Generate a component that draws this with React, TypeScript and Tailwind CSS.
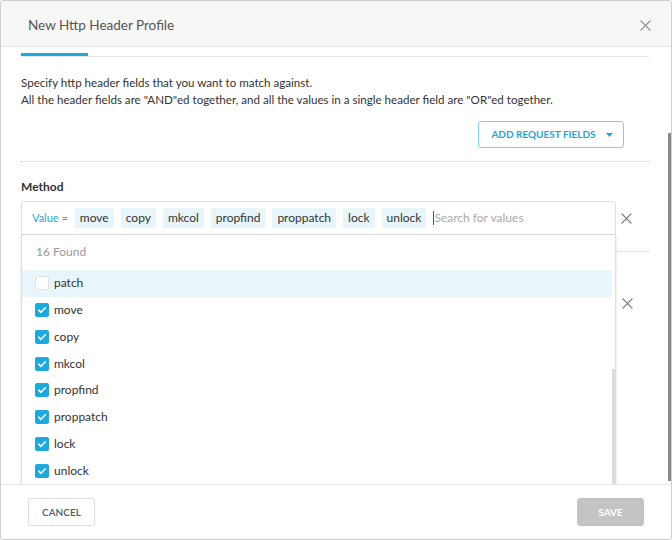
import React from "react";

const XIcon = ({ size = 11, color = "#6b7785" }: { size?: number; color?: string }) => (
  <svg width={size} height={size} viewBox="0 0 12 12" fill="none">
    <path d="M1 1L11 11M11 1L1 11" stroke={color} strokeWidth="1.3" strokeLinecap="round" />
  </svg>
);

const Check = ({ checked }: { checked: boolean }) =>
  checked ? (
    <div className="w-[14px] h-[14px] rounded-[2px] bg-[#1ea9dd] flex items-center justify-center">
      <svg width="10" height="10" viewBox="0 0 10 10" fill="none">
        <path d="M1.8 5.2L4 7.3L8.3 2.8" stroke="#fff" strokeWidth="1.6" strokeLinecap="round" strokeLinejoin="round" />
      </svg>
    </div>
  ) : (
    <div className="w-[14px] h-[14px] rounded-[2px] bg-white border border-[#e2e2e2]" />
  );

const chips = ["move", "copy", "mkcol", "propfind", "proppatch", "lock", "unlock"];
const items: { label: string; checked: boolean }[] = [
  { label: "patch", checked: false },
  { label: "move", checked: true },
  { label: "copy", checked: true },
  { label: "mkcol", checked: true },
  { label: "propfind", checked: true },
  { label: "proppatch", checked: true },
  { label: "lock", checked: true },
  { label: "unlock", checked: true },
];

export default function App() {
  return (
    <div
      className="w-[672px] h-[540px] bg-white border border-[#cfcfcf] rounded-[3px] flex flex-col overflow-hidden text-[#333]"
      style={{ fontFamily: "Lato, 'Open Sans', 'Liberation Sans', sans-serif" }}
    >
      {/* Header */}
      <div className="h-[46px] shrink-0 bg-[#f7f7f7] border-b border-[#e4e4e4] flex items-center justify-between pl-[27px] pr-[20px] pt-[4px]">
        <div className="text-[13.5px] text-[#555]">New Http Header Profile</div>
        <XIcon size={11} color="#8a8a8a" />
      </div>

      {/* Body */}
      <div className="flex-1 flex overflow-hidden border-b border-[#e6e6e6]">
        <div className="flex-1 pl-[20px] pr-[19px] relative">
          {/* Tabs */}
          <div className="mt-[6px]">
            <div className="w-[67px] h-[3px] bg-[#1ea9dd]" />
            <div className="h-px bg-[#e6e6e6]" />
          </div>

          <div className="mt-[17px] text-[11.6px] leading-[17px] text-[#333]">
            <div>Specify http header fields that you want to match against.</div>
            <div>All the header fields are "AND"ed together, and all the values in a single header field are "OR"ed together.</div>
          </div>

          <div className="flex justify-end mt-[13px] pr-[25px]">
            <button className="h-[27px] w-[146px] border border-[#7fd0ef] rounded-[3px] flex items-center justify-center gap-[10px] text-[10px] font-bold text-[#1ea5d8] bg-white pl-[2px]">
              <span>ADD REQUEST FIELDS</span>
              <svg width="7" height="4" viewBox="0 0 7 4">
                <path d="M0 0H7L3.5 4Z" fill="#1ea5d8" />
              </svg>
            </button>
          </div>

          <div className="mt-[13px] border-t border-dotted border-[#cccccc]" />

          <div className="mt-[16px] text-[12px] leading-[17px] font-bold text-[#333]">Method</div>

          {/* Method row */}
          <div className="mt-[6px] flex items-start">
            <div className="relative w-[595px]">
              <div className="h-[34px] border border-[#dedede] rounded-t-[3px] flex items-center pl-[10px] gap-[7px] text-[12px] bg-white">
                <span className="text-[11px] text-[#1ea9dd]">Value =</span>
                {chips.map((c) => (
                  <span key={c} className="h-[20px] px-[5px] bg-[#e8f6fb] flex items-center text-[#333]">
                    {c}
                  </span>
                ))}
                <span className="flex items-center text-[#aaa]">
                  <span className="w-px h-[14px] bg-[#555]" />
                  <span>Search for values</span>
                </span>
              </div>

              {/* Dropdown */}
              <div className="absolute left-0 top-[34px] w-[595px] h-[250px] bg-white border border-t-0 border-[#dedede] shadow-[0_1px_3px_rgba(0,0,0,0.12)] flex z-10">
                <div className="flex-1 flex flex-col">
                  <div className="h-[35px] flex items-center pl-[14px] text-[12px] text-[#9a9a9a]">16 Found</div>
                  {items.map((it, i) => (
                    <div
                      key={it.label}
                      className={`h-[26.8px] flex items-center pl-[13px] gap-[5px] text-[12px] text-[#333] ${i === 0 ? "bg-[#e8f5fb]" : ""}`}
                    >
                      <Check checked={it.checked} />
                      <span>{it.label}</span>
                    </div>
                  ))}
                </div>
                <div className="w-[3px] flex flex-col">
                  <div className="mt-[134px] flex-1 bg-[#dcdcdc]" />
                </div>
              </div>
            </div>
            <div className="ml-[5px] h-[34px] flex items-center">
              <XIcon />
            </div>
          </div>

          <div className="mt-[16px] border-t border-dotted border-[#cccccc]" />

          <div className="mt-[46px] flex justify-end pr-[16px]">
            <XIcon />
          </div>
        </div>
        <div className="w-[3px] flex flex-col">
          <div className="mt-[86px] h-[348px] bg-[#8a8a8a]" />
        </div>
      </div>

      {/* Footer */}
      <div className="h-[54px] shrink-0 flex items-start justify-between pt-[13px] px-[27px]">
        <button className="h-[28px] w-[67px] border border-[#dedede] rounded-[3px] text-[10px] font-semibold text-[#4d5b6a] bg-white">
          CANCEL
        </button>
        <button className="h-[28px] w-[67px] rounded-[3px] text-[10px] font-bold text-white bg-[#c3c3c3]">
          SAVE
        </button>
      </div>
    </div>
  );
}
